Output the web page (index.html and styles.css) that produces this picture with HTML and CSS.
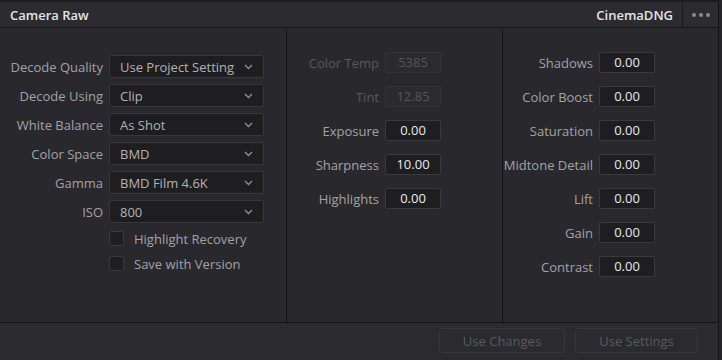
FILE: index.html
```html
<!DOCTYPE html>
<html>
<head>
<meta charset="utf-8">
<link rel="stylesheet" href="styles.css">
</head>
<body>
<div class="window">
  <div class="panel">
    <div class="header">
      <div class="title">Camera Raw</div>
      <div class="format">CinemaDNG</div>
      <div class="more"><span class="dot"></span><span class="dot"></span><span class="dot"></span></div>
    </div>
    <div class="content">
      <div class="col col1">
        <div class="row"><span class="label">Decode Quality</span><div class="select"><span>Use Project Setting</span><svg class="chev" width="9" height="6" viewBox="0 0 9 6"><polyline points="1,1 4.5,4.5 8,1" fill="none" stroke="#8e8e92" stroke-width="1.4"/></svg></div></div>
        <div class="row"><span class="label">Decode Using</span><div class="select"><span>Clip</span><svg class="chev" width="9" height="6" viewBox="0 0 9 6"><polyline points="1,1 4.5,4.5 8,1" fill="none" stroke="#8e8e92" stroke-width="1.4"/></svg></div></div>
        <div class="row"><span class="label">White Balance</span><div class="select"><span>As Shot</span><svg class="chev" width="9" height="6" viewBox="0 0 9 6"><polyline points="1,1 4.5,4.5 8,1" fill="none" stroke="#8e8e92" stroke-width="1.4"/></svg></div></div>
        <div class="row"><span class="label">Color Space</span><div class="select"><span>BMD</span><svg class="chev" width="9" height="6" viewBox="0 0 9 6"><polyline points="1,1 4.5,4.5 8,1" fill="none" stroke="#8e8e92" stroke-width="1.4"/></svg></div></div>
        <div class="row"><span class="label">Gamma</span><div class="select"><span>BMD Film 4.6K</span><svg class="chev" width="9" height="6" viewBox="0 0 9 6"><polyline points="1,1 4.5,4.5 8,1" fill="none" stroke="#8e8e92" stroke-width="1.4"/></svg></div></div>
        <div class="row"><span class="label">ISO</span><div class="select"><span>800</span><svg class="chev" width="9" height="6" viewBox="0 0 9 6"><polyline points="1,1 4.5,4.5 8,1" fill="none" stroke="#8e8e92" stroke-width="1.4"/></svg></div></div>
        <div class="checks">
          <div class="check"><span class="box"></span><span class="ctext">Highlight Recovery</span></div>
          <div class="check"><span class="box"></span><span class="ctext">Save with Version</span></div>
        </div>
      </div>
      <div class="col col2">
        <div class="frow"><span class="flabel dim">Color Temp</span><div class="field disabled">5385</div></div>
        <div class="frow"><span class="flabel dim">Tint</span><div class="field disabled">12.85</div></div>
        <div class="frow"><span class="flabel">Exposure</span><div class="field">0.00</div></div>
        <div class="frow"><span class="flabel">Sharpness</span><div class="field">10.00</div></div>
        <div class="frow"><span class="flabel">Highlights</span><div class="field">0.00</div></div>
      </div>
      <div class="col col3">
        <div class="frow"><span class="flabel">Shadows</span><div class="field">0.00</div></div>
        <div class="frow"><span class="flabel">Color Boost</span><div class="field">0.00</div></div>
        <div class="frow"><span class="flabel">Saturation</span><div class="field">0.00</div></div>
        <div class="frow"><span class="flabel">Midtone Detail</span><div class="field">0.00</div></div>
        <div class="frow"><span class="flabel">Lift</span><div class="field">0.00</div></div>
        <div class="frow"><span class="flabel">Gain</span><div class="field">0.00</div></div>
        <div class="frow"><span class="flabel">Contrast</span><div class="field">0.00</div></div>
      </div>
    </div>
    <div class="footer">
      <div class="btn btn-changes">Use Changes</div>
      <div class="btn btn-settings">Use Settings</div>
    </div>
  </div>
  <div class="edge"></div>
</div>
</body>
</html>
```
FILE: styles.css
```css
html, body {
  margin: 0;
  padding: 0;
  background: #1b1b1e;
}
body {
  font-family: "Open Sans", "Liberation Sans", sans-serif;
  font-size: 13px;
  width: 722px;
  height: 360px;
  overflow: hidden;
}
.window {
  display: flex;
  height: 360px;
}
.panel {
  width: 718px;
  display: flex;
  flex-direction: column;
  border-right: 1px solid #141416;
}
.edge {
  width: 3px;
  background: #252529;
}
.header {
  margin-top: 2px;
  height: 25px;
  background: #2b2b30;
  border-bottom: 1px solid #151517;
  display: flex;
  align-items: center;
}
.title {
  flex: 1;
  padding-left: 10px;
  color: #e4e4e6;
  font-weight: 600;
}
.format {
  padding-right: 9px;
  color: #e4e4e6;
  font-weight: 600;
}
.more {
  width: 35px;
  height: 25px;
  border-left: 1px solid #18181a;
  display: flex;
  align-items: center;
  justify-content: center;
  gap: 3px;
}
.dot {
  width: 4px;
  height: 4px;
  border-radius: 50%;
  background: #8c8c90;
}
.content {
  height: 294px;
  background: #28282d;
  display: flex;
}
.col {
  display: flex;
  flex-direction: column;
}
.col1 {
  width: 287px;
  border-right: 1px solid #141416;
  padding-top: 27px;
  box-sizing: border-box;
  gap: 6px;
}
.col2 {
  width: 216px;
  border-right: 1px solid #141416;
  padding-top: 24px;
  box-sizing: border-box;
  gap: 13px;
}
.col3 {
  flex: 1;
  padding-top: 24px;
  gap: 13px;
}
.row {
  display: flex;
  align-items: center;
  height: 23px;
}
.label {
  width: 103px;
  text-align: right;
  color: #a3a3a6;
  padding-right: 6px;
}
.select {
  width: 155px;
  height: 23px;
  box-sizing: border-box;
  background: #1e1e21;
  border: 1px solid #38383c;
  border-radius: 2px;
  display: flex;
  align-items: center;
  justify-content: space-between;
  padding: 0 10px 0 10px;
  color: #b2b2b5;
}
.chev {
  display: block;
}
.checks {
  margin-top: 2px;
  display: flex;
  flex-direction: column;
  gap: 10px;
}
.check {
  display: flex;
  align-items: center;
  padding-left: 109px;
  height: 15px;
}
.box {
  width: 15px;
  height: 15px;
  box-sizing: border-box;
  background: #1f1f22;
  border: 1px solid #3a3a3e;
  border-radius: 2px;
}
.ctext {
  margin-left: 10px;
  color: #a3a3a6;
}
.frow {
  display: flex;
  align-items: center;
  height: 21px;
}
.col2 .flabel {
  width: 92px;
}
.col3 .flabel {
  width: 90px;
}
.flabel {
  text-align: right;
  color: #a3a3a6;
  padding-right: 6px;
}
.flabel.dim {
  color: #58585d;
}
.field {
  width: 56px;
  height: 21px;
  box-sizing: border-box;
  background: #1e1e21;
  border: 1px solid #3a3a3e;
  border-radius: 2px;
  color: #e8e8ea;
  text-align: center;
  line-height: 19px;
}
.field.disabled {
  background: #2a2a2f;
  border-color: #34343a;
  color: #56565b;
}
.footer {
  flex: 1;
  background: #2a2a2f;
  border-top: 1px solid #131315;
  display: flex;
  justify-content: flex-end;
  align-items: flex-start;
  padding: 5px 20px 0 0;
  gap: 10px;
}
.btn {
  height: 25px;
  box-sizing: border-box;
  border: 1px solid #36363b;
  border-radius: 3px;
  color: #5a5a60;
  display: flex;
  align-items: center;
  justify-content: center;
}
.btn-changes {
  width: 126px;
}
.btn-settings {
  width: 123px;
}
```
